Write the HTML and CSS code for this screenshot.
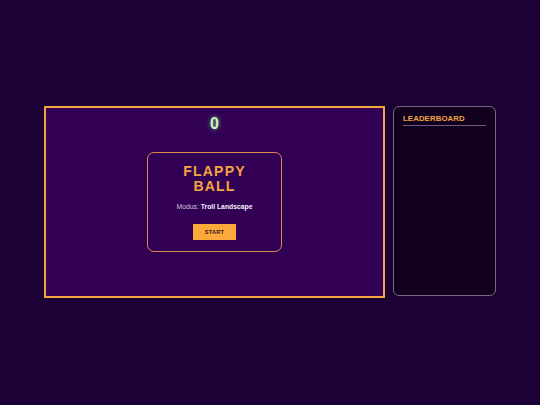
FILE: index.html
```html
<!DOCTYPE html>
<html>
<head>
    <title>Flappy Ball</title>
    <link rel="stylesheet" href="styles.css">
</head>
<body>
    <div class="page">
        <div class="layout">
            <div class="game">
                <div class="score">0</div>
                <div class="menu">
                    <h1 class="title">FLAPPY<br>BALL</h1>
                    <p class="mode">Modus: <b>Troll Landscape</b></p>
                    <button class="start">START</button>
                </div>
            </div>
            <div class="board">
                <h2 class="board-title">LEADERBOARD</h2>
                <ol class="board-list"></ol>
            </div>
        </div>
    </div>
</body>
</html>
```

FILE: styles.css
```css
html, body {
    margin: 0;
    height: 100%;
}

body {
    background-color: #1a0032;
    background-image:
        linear-gradient(rgba(90, 30, 140, 0.07) 1px, transparent 1px),
        linear-gradient(90deg, rgba(90, 30, 140, 0.07) 1px, transparent 1px);
    background-size: 4px 4px;
    font-family: "Liberation Sans", Arial, sans-serif;
}

.page {
    height: 100%;
    display: flex;
    justify-content: center;
    align-items: center;
}

.layout {
    display: flex;
    align-items: flex-start;
    gap: 8px;
    margin-bottom: 1px;
}

.game {
    position: relative;
    width: 337px;
    height: 188px;
    border: 2px solid #f5a53e;
    background: #320055;
    display: flex;
    justify-content: center;
    align-items: center;
}

.score {
    position: absolute;
    top: 7px;
    left: 0;
    right: 0;
    text-align: center;
    font-size: 16px;
    font-weight: bold;
    color: #c8f5c0;
    text-shadow: 0 0 4px rgba(140, 255, 140, 0.7);
}

.menu {
    width: 133px;
    height: 98px;
    border: 1px solid #dc8a52;
    border-radius: 7px;
    display: flex;
    flex-direction: column;
    align-items: center;
}

.title {
    margin: 11px 0 0;
    font-size: 14px;
    line-height: 15px;
    letter-spacing: 1.2px;
    text-align: center;
    color: #f5a53e;
}

.mode {
    margin: 9px 0 0;
    font-size: 6.8px;
    color: #cfc6da;
}

.mode b {
    color: #f4f0f8;
}

.start {
    margin-top: 14px;
    width: 43px;
    height: 16px;
    padding: 0;
    border: none;
    background: #fba93b;
    color: #3a1020;
    font-family: inherit;
    font-size: 5.5px;
    font-weight: bold;
    letter-spacing: 0.3px;
}

.board {
    width: 83px;
    height: 170px;
    padding: 7px 9px 11px;
    border: 1px solid #7a6688;
    border-radius: 6px;
    background: #12001f;
}

.board-title {
    margin: 0;
    padding-bottom: 2px;
    border-bottom: 1px solid #6f5a86;
    font-size: 7.8px;
    letter-spacing: 0.1px;
    color: #f5a53e;
}

.board-list {
    margin: 0;
    padding: 0;
    list-style: none;
}
```
